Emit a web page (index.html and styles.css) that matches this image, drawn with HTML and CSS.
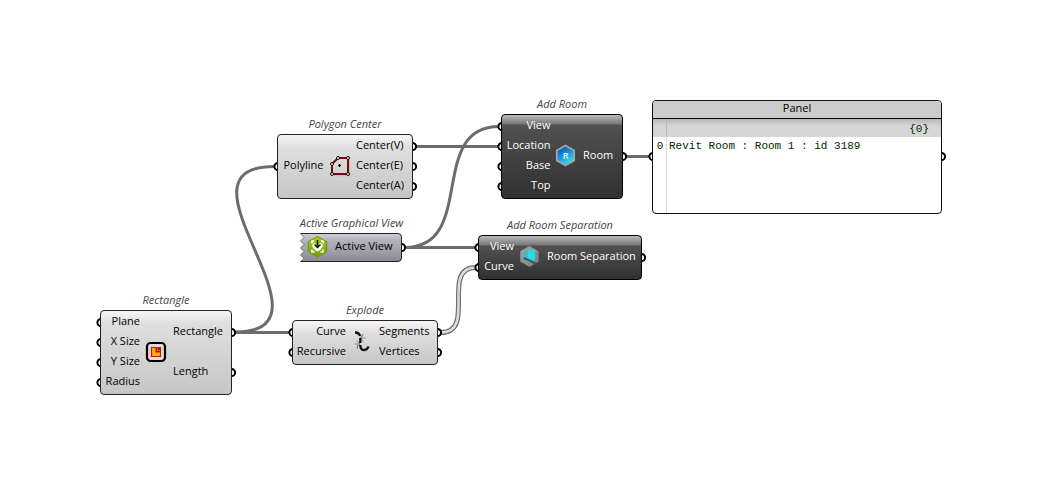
FILE: index.html
```html
<!DOCTYPE html>
<html lang="en">
<head>
<meta charset="utf-8">
<title>Room graph</title>
<link rel="stylesheet" href="styles.css">
</head>
<body>
<main class="canvas">
  <svg class="wires" width="1041" height="494" viewBox="0 0 1041 494">
    <g class="wire">
      <path d="M235 332C346 332 163 166.500 274 166.500"/>
      <path d="M235 332.500H289"/>
      <path d="M416 146.500H499"/>
      <path d="M405 247.500C477 247.500 427 126.500 499 126.500"/>
      <path d="M405 247.500H476"/>
      <path d="M626 156.500H650"/>
    </g>
    <path class="wire-list" d="M441 332.500C477 332.500 440 267.500 476 267.500"/>
    <path class="wire-gap" d="M441 332.500C477 332.500 440 267.500 476 267.500"/>
    <path class="wire-core" d="M441 332.500C477 332.500 440 267.500 476 267.500"/>
    <g class="port">
      <circle cx="101" cy="322.500" r="3.600"/><circle cx="101" cy="342.500" r="3.600"/><circle cx="101" cy="362.500" r="3.600"/><circle cx="101" cy="382.500" r="3.600"/>
      <circle cx="231.500" cy="332.500" r="3.600"/><circle cx="231.500" cy="372.500" r="3.600"/>
      <circle cx="278" cy="166.500" r="3.600"/>
      <circle cx="412.500" cy="146.500" r="3.600"/><circle cx="412.500" cy="166.500" r="3.600"/><circle cx="412.500" cy="186.500" r="3.600"/>
      <circle cx="401.500" cy="247.500" r="3.600"/>
      <circle cx="293" cy="332.500" r="3.600"/><circle cx="293" cy="352.500" r="3.600"/>
      <circle cx="437.500" cy="332.500" r="3.600"/><circle cx="437.500" cy="352.500" r="3.600"/>
      <circle cx="502" cy="126.500" r="3.600"/><circle cx="502" cy="146.500" r="3.600"/><circle cx="502" cy="166.500" r="3.600"/><circle cx="502" cy="186.500" r="3.600"/>
      <circle cx="622.500" cy="156.500" r="3.600"/>
      <circle cx="479" cy="247.500" r="3.600"/><circle cx="479" cy="267.500" r="3.600"/>
      <circle cx="641.500" cy="257.500" r="3.600"/>
      <circle cx="653" cy="156.500" r="3.600"/><circle cx="941.500" cy="156.500" r="3.600"/>
    </g>
  </svg>

  <section class="node rectangle">
    <h2 class="title">Rectangle</h2>
    <div class="box">
      <div class="inputs"><span>Plane</span><span>X Size</span><span>Y Size</span><span>Radius</span></div>
      <svg class="icon" width="24" height="24" viewBox="0 0 24 24">
        <rect x="3" y="4" width="18" height="18" rx="3.500" fill="#ddd" stroke="#000" stroke-width="2.200"/>
        <path d="M7.500 8.500H16.500V17.500H7.500Z" fill="#ffb000" stroke="#b82000" stroke-width="1.200"/>
        <path d="M11.500 9V13.500H16V9Z" fill="#a51600"/><path d="M13.500 9V11.500H16" fill="none" stroke="#ef6c00"/>
      </svg>
      <div class="outputs"><span>Rectangle</span><span>Length</span></div>
    </div>
  </section>

  <section class="node polygon">
    <h2 class="title">Polygon Center</h2>
    <div class="box">
      <div class="inputs"><span>Polyline</span></div>
      <svg class="icon" width="24" height="24" viewBox="0 0 24 24">
        <path d="M5 22.800H21.800V7" fill="none" stroke="#bbb"/>
        <path d="M4 11L10 5H20V21H4Z" fill="none" stroke="#7c0808" stroke-width="2"/>
        <g fill="#fff" stroke="#000"><circle cx="4" cy="11" r="1.500"/><circle cx="10" cy="5" r="1.500"/><circle cx="20" cy="5" r="1.500"/><circle cx="20" cy="21" r="1.500"/><circle cx="4" cy="21" r="1.500"/></g>
        <path d="M10 12.500H13M11.500 11V14" stroke="#000" stroke-width="1.200"/>
      </svg>
      <div class="outputs"><span>Center(V)</span><span>Center(E)</span><span>Center(A)</span></div>
    </div>
  </section>

  <section class="node active">
    <h2 class="title">Active Graphical View</h2>
    <div class="param">
      <svg class="torn" width="103" height="30" viewBox="0 0 103 30">
        <defs>
          <linearGradient id="param" x2="0" y2="1"><stop offset="0" stop-color="#d0d0d7"/><stop offset=".25" stop-color="#b3b3bc"/><stop offset="1" stop-color="#8c8997"/></linearGradient>
          <linearGradient id="lime" x2="0" y2="1"><stop offset="0" stop-color="#a8cf1c"/><stop offset="1" stop-color="#719c00"/></linearGradient>
        </defs>
        <path d="M.5 .5H98Q101.500 .5 101.500 4V25Q101.500 28.500 98 28.500H.5L4 25.500L.5 22L4 18.500L.5 15L4 11.500L.5 8L4 4.500Z" fill="url(#param)"/>
        <path d="M.5 28.500L4 25.500L.5 22L4 18.500L.5 15L4 11.500L.5 8L4 4.500L.5 .5" fill="none" stroke="#555" stroke-width=".8"/>
        <path d="M.5 .5H98Q101.500 .5 101.500 4V25Q101.500 28.500 98 28.500H.5" fill="none" stroke="#222"/>
      </svg>
      <svg class="icon" width="24" height="24" viewBox="0 0 24 24">
        <path d="M11.500 1.500L20.700 6.600V16.800L11.500 22L2.300 16.800V6.600Z" fill="url(#lime)" stroke="#719505"/>
        <path d="M8 6H6V8.500M15 6H17V8.500M6 14.500V17H8.500M17 14.500V17H14.500" fill="none" stroke="#fff" stroke-width="1.500"/>
        <path d="M6 10Q7.500 8 9 8L11.500 12L14 8Q15.500 8 17 10Q16.500 14 11.500 16.500Q6.500 14 6 10Z" fill="#fff"/>
        <path d="M11.500 5V12M8.500 9.500L11.500 12.500L14.500 9.500" fill="none" stroke="#111" stroke-width="1.400"/>
      </svg>
      <span class="name">Active View</span>
    </div>
  </section>

  <section class="node explode">
    <h2 class="title">Explode</h2>
    <div class="box">
      <div class="inputs"><span>Curve</span><span>Recursive</span></div>
      <svg class="icon" width="24" height="24" viewBox="0 0 24 24">
        <path d="M11 9L14.500 5.500M11 9H16.500M11 9L14.500 12.500M11 15L7.500 12M11 15H5.500M11 15L7.500 18.500M13 5V8M8.500 16V20" stroke="#666" stroke-width=".7"/>
        <g fill="none" stroke="#111" stroke-width="2.300"><path d="M6 3.500C9 3.500 10.500 5 11 7"/><path d="M11.300 9V14"/><path d="M11.300 16C11.500 23 18 22 19.500 17.500"/></g>
      </svg>
      <div class="outputs"><span>Segments</span><span>Vertices</span></div>
    </div>
  </section>

  <section class="node room">
    <h2 class="title">Add Room</h2>
    <div class="box dark">
      <div class="inputs"><span>View</span><span>Location</span><span>Base</span><span>Top</span></div>
      <svg class="icon" width="24" height="24" viewBox="0 0 24 24">
        <defs><linearGradient id="blue" x2=".5" y2="1"><stop offset=".25" stop-color="#0963cb"/><stop offset="1" stop-color="#31def0"/></linearGradient></defs>
        <path d="M12.500 2.500L21.200 7.500V17.500L12.500 22.500L3.800 17.500V7.500Z" fill="url(#blue)" stroke="#a5a5a5" stroke-width="1.800"/>
        <text x="12.500" y="15.500" class="glyph">R</text>
      </svg>
      <div class="outputs"><span>Room</span></div>
    </div>
  </section>

  <section class="node separation">
    <h2 class="title">Add Room Separation</h2>
    <div class="box dark">
      <div class="inputs"><span>View</span><span>Curve</span></div>
      <svg class="icon" width="24" height="24" viewBox="0 0 24 24">
        <defs><linearGradient id="steel" x2="1" y2="1"><stop stop-color="#aaa"/><stop offset="1" stop-color="#777"/></linearGradient></defs>
        <path d="M11.500 2L20.700 7.200V17.600L11.500 23L2.300 17.600V7.200Z" fill="url(#steel)"/>
        <path d="M5.500 8L10 5.500V15L5.500 14Z" fill="#43b9c2"/><path d="M10 5.500L17 6V17L10 14Z" fill="#22dce9"/>
        <path d="M7 14.500L16.500 19" stroke="#12616c" stroke-width="1.400"/><circle cx="7" cy="14.500" r="1.300" fill="#12616c"/><circle cx="16.500" cy="19" r="1.300" fill="#12616c"/>
      </svg>
      <div class="outputs"><span>Room Separation</span></div>
    </div>
  </section>

  <section class="panel">
    <header class="panel-head">Panel</header>
    <div class="panel-path">{0}</div>
    <div class="panel-body"><span class="index">0</span><span class="value">Revit Room : Room 1 : id 3189</span></div>
  </section>
</main>
</body>
</html>
```

FILE: styles.css
```css
body { margin: 0; background: #fff; }
.canvas {
  position: relative;
  width: 1041px;
  height: 494px;
  overflow: hidden;
  font: 11px/20px "Open Sans", "Noto Sans", sans-serif;
  color: #000;
}
.wires { position: absolute; inset: 0; }
.wire { fill: none; stroke: #6c6c6c; stroke-width: 3; }
.wire-list { fill: none; stroke: #707070; stroke-width: 5; }
.wire-gap { fill: none; stroke: #eee; stroke-width: 2.4; }
.wire-core { fill: none; stroke: #bbb; stroke-width: 0.6; }
.port { fill: #fff; stroke: #000; stroke-width: 2; }

/* Each node sits at its canvas position, with its title above the box. */
.node { position: absolute; white-space: nowrap; }
.rectangle { left: 100px; top: 290px; width: 132px; }
.polygon { left: 277px; top: 114px; width: 136px; }
.active { left: 300px; top: 213px; width: 103px; }
.explode { left: 292px; top: 300px; width: 146px; }
.room { left: 501px; top: 94px; width: 122px; }
.separation { left: 478px; top: 215px; width: 164px; }

.title {
  display: flex;
  justify-content: center;
  margin: 0;
  height: 20px;
  font-size: 11px;
  font-weight: 400;
  font-style: italic;
  line-height: 19px;
  color: #444;
}
.box {
  display: flex;
  align-items: center;
  box-sizing: border-box;
  padding-bottom: 3px;
  border: 1px solid #222;
  border-radius: 4px;
  background: linear-gradient(#f6f6f6, #dfdfdf 12px, #c6c6c6);
}
.box.dark {
  color: #fff;
  border-color: #000;
  background: linear-gradient(#bbb, #777 9px, #515151 10px, #303030);
}
.inputs, .outputs { display: flex; flex-direction: column; }
.inputs { align-items: flex-end; }
.outputs { align-items: flex-start; }
.icon { flex: none; }

.rectangle .inputs { width: 39px; }
.rectangle .icon { margin: 0 5px 0 4px; }
.rectangle .outputs { line-height: 40px; }
.polygon .inputs { width: 45.5px; }
.polygon .icon { margin: 0 4.5px 0 4px; }
.explode .inputs { width: 53px; }
.explode .icon { margin: 0 6px 0 3px; }
.room .inputs { width: 48.5px; }
.room .icon { margin: 0 6px 0 2.5px; }
.separation .inputs { width: 35px; }
.separation .icon { margin: 0 5px 0 4px; }

.param { position: relative; display: flex; align-items: center; height: 27px; gap: 5px; padding-left: 6px; }
.torn { position: absolute; left: 0; top: 0; }
.param .icon, .name { position: relative; }
.name { padding-bottom: 2px; }
.glyph { fill: #fff; font: 600 9px "Open Sans", sans-serif; text-anchor: middle; }

.panel {
  position: absolute;
  left: 652px;
  top: 100px;
  display: flex;
  flex-direction: column;
  box-sizing: border-box;
  width: 290px;
  height: 114px;
  overflow: hidden;
  border: 1px solid #111;
  border-radius: 4px;
  background: #fff;
}
.panel-head {
  height: 17px;
  border-bottom: 1px solid #000;
  background: #ccc;
  line-height: 14px;
  text-align: center;
}
.panel-path, .panel-body { font-family: "Liberation Mono", monospace; color: #002800; }
.panel-path {
  box-sizing: border-box;
  height: 18px;
  padding-right: 12px;
  background: linear-gradient(90deg, transparent 13px, #bcbcbc 13px 14px, transparent 14px), linear-gradient(#b8b5b8, #d6d6d6 7px);
  line-height: 20px;
  text-align: right;
}
.panel-body { display: flex; flex: 1; line-height: 19px; }
.index { box-sizing: border-box; width: 14px; padding-left: 1px; border-right: 1px solid #ddd; text-align: center; }
.value { padding-left: 2px; }
```
